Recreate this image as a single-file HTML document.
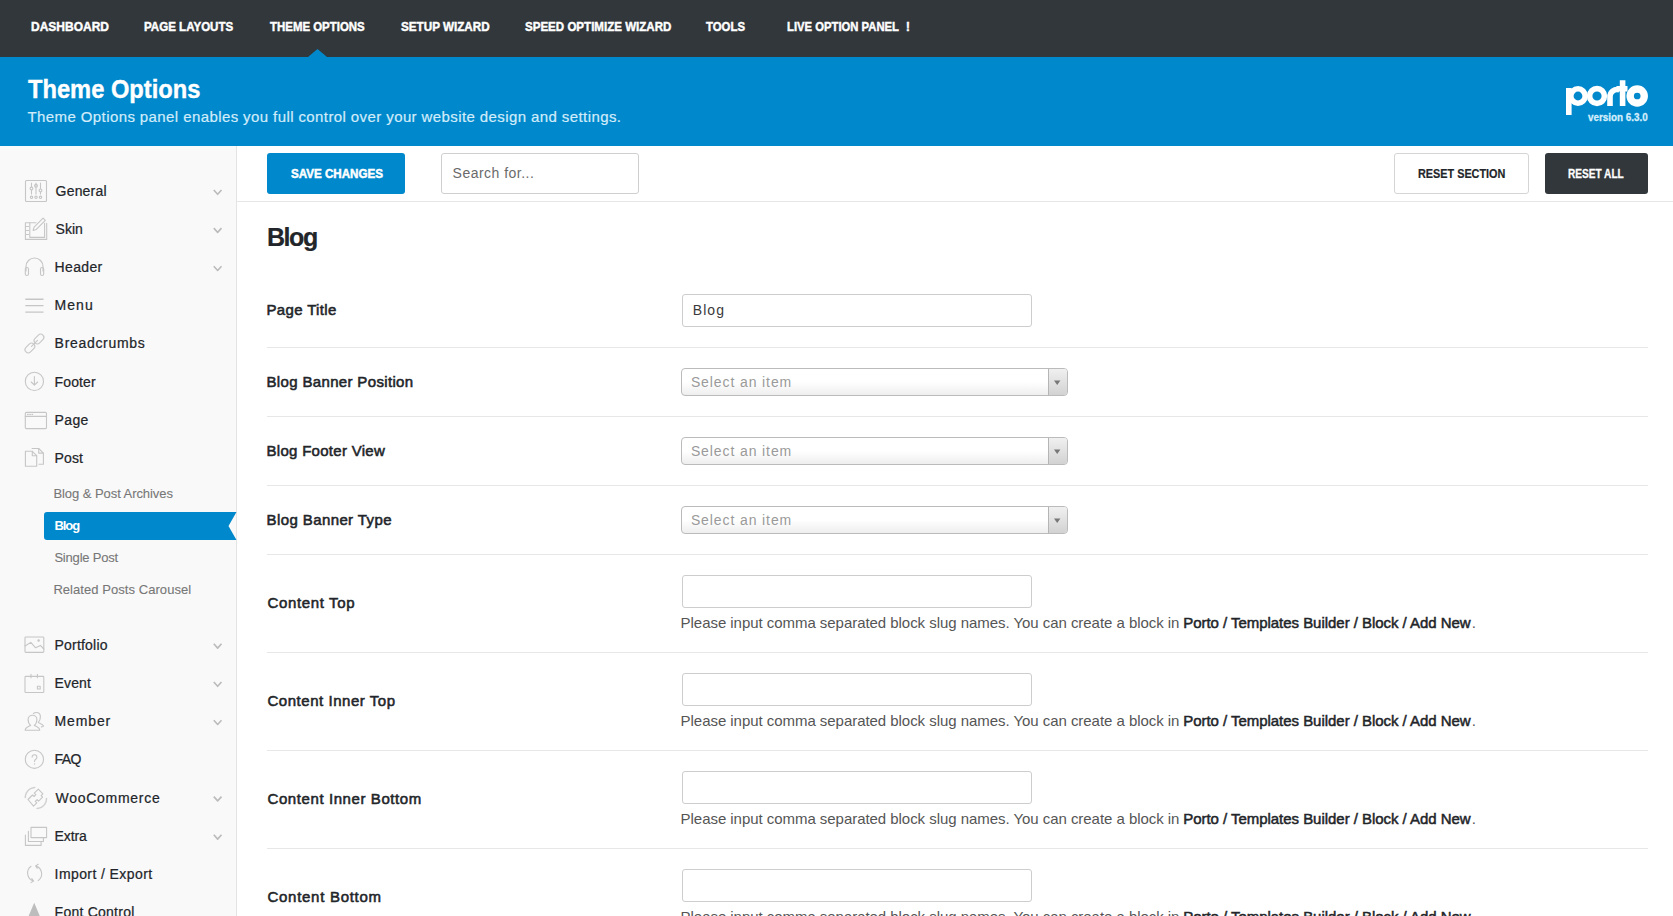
<!DOCTYPE html>
<html><head><meta charset="utf-8"><title>Theme Options</title>
<style>
html,body{margin:0;padding:0;}
body{width:1673px;height:916px;overflow:hidden;position:relative;background:#fff;font-family:"Liberation Sans", sans-serif;}
.t{position:absolute;white-space:nowrap;}
.a{position:absolute;box-sizing:border-box;}
</style></head><body>
<div class='a' style='left:0px;top:0px;width:1673px;height:57px;background:#32373c'></div>
<div class='a' style='left:0px;top:57px;width:1673px;height:89px;background:#0088cc'></div>
<svg class='a' style='left:300px;top:45px' width='36' height='13'><path d='M8 12L17.5 4 27 12z' fill='#0088cc'/></svg>
<svg class='a' style='left:1560px;top:76px' width='95' height='50' viewBox='1560 76 95 50'><g fill='none' stroke='#fff' stroke-width='5.6'><path d='M1568.8 88v27'/><circle cx='1578' cy='96' r='7.2'/><circle cx='1597' cy='96' r='7.4'/><path d='M1610 106v-9a7 7 0 0 1 9.5-7'/><path d='M1622.6 80.2v25.8M1616.5 88.8h11'/><circle cx='1637.2' cy='96' r='7.05' stroke-width='7.4'/></g></svg>
<div class='a' style='left:0px;top:146px;width:236px;height:770px;background:#f9f9f9'></div>
<div class='a' style='left:236px;top:146px;width:1px;height:770px;background:#e4e4e4'></div>
<div class='a' style='left:237px;top:201px;width:1436px;height:1px;background:#e6e6e6'></div>
<div class='a' style='left:267px;top:153px;width:138px;height:41px;background:#0088cc;border-radius:3px'></div>
<div class='a' style='left:441px;top:153px;width:198px;height:41px;background:#fff;border:1px solid #cfcfcf;border-radius:3px'></div>
<div class='a' style='left:1394px;top:153px;width:135px;height:41px;background:#fff;border:1px solid #d5d5d5;border-radius:3px'></div>
<div class='a' style='left:1545px;top:153px;width:103px;height:41px;background:#32373c;border-radius:3px'></div>
<div class='a' style='left:267px;top:347px;width:1381px;height:1px;background:#e7e7e7'></div>
<div class='a' style='left:267px;top:416px;width:1381px;height:1px;background:#e7e7e7'></div>
<div class='a' style='left:267px;top:485px;width:1381px;height:1px;background:#e7e7e7'></div>
<div class='a' style='left:267px;top:554px;width:1381px;height:1px;background:#e7e7e7'></div>
<div class='a' style='left:267px;top:652px;width:1381px;height:1px;background:#e7e7e7'></div>
<div class='a' style='left:267px;top:750px;width:1381px;height:1px;background:#e7e7e7'></div>
<div class='a' style='left:267px;top:848px;width:1381px;height:1px;background:#e7e7e7'></div>
<div class='a' style='left:682px;top:294px;width:350px;height:33px;border:1px solid #cdcdcd;border-radius:3px;background:#fff'></div>
<div class='a' style='left:681px;top:368px;width:387px;height:28px;border:1px solid #bbbbbb;border-radius:4px;background:linear-gradient(#fff 0%,#fff 50%,#eeeeee 100%)'></div>
<div class='a' style='left:1048px;top:369px;width:19px;height:26px;border-left:1px solid #b5b5b5;background:linear-gradient(#f0f0f0,#d2d2d2);border-radius:0 3px 3px 0'></div>
<svg class='a' style='left:1054px;top:380px' width='8' height='6'><path d='M0 0.4h6.4l-3.2 4.6z' fill='#777'/></svg>
<div class='a' style='left:681px;top:437px;width:387px;height:28px;border:1px solid #bbbbbb;border-radius:4px;background:linear-gradient(#fff 0%,#fff 50%,#eeeeee 100%)'></div>
<div class='a' style='left:1048px;top:438px;width:19px;height:26px;border-left:1px solid #b5b5b5;background:linear-gradient(#f0f0f0,#d2d2d2);border-radius:0 3px 3px 0'></div>
<svg class='a' style='left:1054px;top:449px' width='8' height='6'><path d='M0 0.4h6.4l-3.2 4.6z' fill='#777'/></svg>
<div class='a' style='left:681px;top:506px;width:387px;height:28px;border:1px solid #bbbbbb;border-radius:4px;background:linear-gradient(#fff 0%,#fff 50%,#eeeeee 100%)'></div>
<div class='a' style='left:1048px;top:507px;width:19px;height:26px;border-left:1px solid #b5b5b5;background:linear-gradient(#f0f0f0,#d2d2d2);border-radius:0 3px 3px 0'></div>
<svg class='a' style='left:1054px;top:518px' width='8' height='6'><path d='M0 0.4h6.4l-3.2 4.6z' fill='#777'/></svg>
<div class='a' style='left:682px;top:575px;width:350px;height:33px;border:1px solid #cdcdcd;border-radius:3px;background:#fff'></div>
<div class='a' style='left:682px;top:673px;width:350px;height:33px;border:1px solid #cdcdcd;border-radius:3px;background:#fff'></div>
<div class='a' style='left:682px;top:771px;width:350px;height:33px;border:1px solid #cdcdcd;border-radius:3px;background:#fff'></div>
<div class='a' style='left:682px;top:869px;width:350px;height:33px;border:1px solid #cdcdcd;border-radius:3px;background:#fff'></div>
<svg class='a' style='left:44px;top:512px' width='193' height='28'><path d='M3 0H192.5L184.5 14 192.5 28H3A3 3 0 0 1 0 25V3A3 3 0 0 1 3 0z' fill='#0088cc'/></svg>
<svg class='a' style='left:0;top:0' width='236' height='916' viewBox='0 0 236 916' fill='none' stroke='#c6c6c6' stroke-width='1.1' stroke-linecap='round' stroke-linejoin='round'><rect x='25.5' y='180.5' width='21' height='21' rx='1'/><path d='M31.5 183v11M36 183v11M40.5 183v11'/><circle cx='31.5' cy='188.5' r='1.4' fill='#f9f9f9'/><circle cx='36' cy='185.8' r='1.4' fill='#ddd'/><circle cx='40.5' cy='190.4' r='1.4' fill='#f9f9f9'/><circle cx='31.5' cy='197.3' r='1.2'/><circle cx='36' cy='197.3' r='1.2'/><circle cx='40.5' cy='197.3' r='1.2'/><path d='M36 222.7h-10.6v16.7h21.3v-16'/><path d='M29.8 222.7v14.7h14.8v-14'/><path d='M26.5 226.5h2M26.5 230.5h2M26.5 234.5h2'/><path d='M33.1 230.4l1-3.2 9-9 2.2 2.2-9 9z'/><path d='M26 271v-4.5a8.5 8.5 0 0 1 17 0v4.5'/><rect x='25.3' y='267.5' width='3.2' height='8' rx='1.6'/><rect x='40.5' y='267.5' width='3.2' height='8' rx='1.6'/><path d='M25.3 299.2h18.2M25.3 305.6h18.2M25.3 312.1h18.2' stroke-width='1.4' stroke-linecap='butt'/><rect x='33.5' y='335.8' width='11' height='6.4' rx='3.2' transform='rotate(-45 39 339)'/><rect x='24.4' y='344.8' width='11' height='6.4' rx='3.2' transform='rotate(-45 29.9 348)'/><path d='M31.5 346.4l6-6'/><circle cx='34.4' cy='381.4' r='9.1'/><path d='M34.4 376.5v8.5M31.2 382l3.2 3.2 3.2-3.2'/><rect x='25.3' y='412.4' width='21.2' height='16.2' rx='1'/><path d='M25.3 416.4h21.2'/><path d='M27.6 414.4h.6M29.8 414.4h.6M32 414.4h.6' stroke-width='1.2'/><path d='M32.1 448.5h6.6l4.7 4.6v11.2h-4.4'/><path d='M38.7 448.5v4.6h4.7'/><path d='M25.4 451.3h6.9l4.4 4.4v10.5h-11.3z'/><path d='M32.3 451.3v4.4h4.4'/><rect x='25' y='637' width='18.8' height='15.4' rx='.8'/><path d='M25 646l5.8-3.6 4.8 5.4 4.8-2.4 3.4 3.6'/><circle cx='38.6' cy='640.6' r='.7' fill='#c6c6c6'/><rect x='25' y='676.4' width='18.8' height='16.1' rx='.8'/><path d='M31 674.2v3.6M37.4 674.2v3.6'/><rect x='37.4' y='686.2' width='2.8' height='2.8'/><path d='M25.2 730.2c0-2.6 3.5-3.8 5.5-4.8-2.2-1.6-2.6-3.6-2.6-5.8 0-2.6 2-4.3 4.4-4.3s4.4 1.7 4.4 4.3c0 2.2-.4 4.2-2.6 5.8 2 1 5.4 2.2 5.4 4.8z'/><path d='M33.4 713.5c.9-.7 2-1 3-1 2.4 0 4 1.8 4 4.3 0 2-.4 4-2.1 5.6 1.6.8 4.6 1.8 5.3 3.6-.4.6-1.4.9-2.2.9'/><circle cx='34.4' cy='759.3' r='9.1'/><path d='M32.1 757.1a2.4 2.4 0 1 1 3.6 2.1c-.9.5-1.2 1.1-1.2 2.2'/><path d='M34.5 764h.01' stroke-width='1.4'/><path d='M25.3 797.5a10 10 0 0 1 10.2-10' stroke-dasharray='1.2 1.1' stroke-width='1.5' stroke='#d0d0d0'/><path d='M46.5 798.5a10 10 0 0 1-10.4 10' stroke-dasharray='1.2 1.1' stroke-width='1.5' stroke='#d0d0d0'/><path d='M28 799.5l4.5-4.5 1.5 1.5 1.8-1.8-1.5-1.5 4-4 4.6 4.6-1.8 1.8 1.5 1.5-4 4-1.5-1.5-1.8 1.8 1.5 1.5-3.3 3.3z'/><rect x='31' y='827.4' width='15.6' height='10.2'/><path d='M28.4 831.3v10.2h15v-3.9M25.4 835.1v10.3h15.7v-3.9'/><path d='M31 866.3a8.3 8.3 0 0 0 2.4 14.6M31.8 878.6l1.8 2.4-2.6 1.6'/><path d='M38.2 880.6a8.3 8.3 0 0 0-2.6-14.7M37.2 868.3l-1.6-2.4 2.6-1.6'/><path d='M34.2 902.8L28.2 917h12z' fill='#bdbdbd' stroke='none'/><path d='M213.8 190.0l3.85 4.3 3.85-4.3' stroke='#bbbbbb' stroke-width='1.6' stroke-linecap='butt'/><path d='M213.8 228.1l3.85 4.3 3.85-4.3' stroke='#bbbbbb' stroke-width='1.6' stroke-linecap='butt'/><path d='M213.8 266.2l3.85 4.3 3.85-4.3' stroke='#bbbbbb' stroke-width='1.6' stroke-linecap='butt'/><path d='M213.8 643.8l3.85 4.3 3.85-4.3' stroke='#bbbbbb' stroke-width='1.6' stroke-linecap='butt'/><path d='M213.8 682.0l3.85 4.3 3.85-4.3' stroke='#bbbbbb' stroke-width='1.6' stroke-linecap='butt'/><path d='M213.8 720.2l3.85 4.3 3.85-4.3' stroke='#bbbbbb' stroke-width='1.6' stroke-linecap='butt'/><path d='M213.8 796.6l3.85 4.3 3.85-4.3' stroke='#bbbbbb' stroke-width='1.6' stroke-linecap='butt'/><path d='M213.8 834.8l3.85 4.3 3.85-4.3' stroke='#bbbbbb' stroke-width='1.6' stroke-linecap='butt'/></svg>

<div class='t' style='left:31.00px;top:20.00px;font-size:13px;line-height:13px;font-weight:700;color:#fff;transform:scaleX(0.9226);transform-origin:0 0;-webkit-text-stroke:0.45px #fff;'>DASHBOARD</div><div class='t' style='left:144.00px;top:20.00px;font-size:13px;line-height:13px;font-weight:700;color:#fff;transform:scaleX(0.8885);transform-origin:0 0;-webkit-text-stroke:0.45px #fff;'>PAGE LAYOUTS</div><div class='t' style='left:270.00px;top:20.00px;font-size:13px;line-height:13px;font-weight:700;color:#fff;transform:scaleX(0.8801);transform-origin:0 0;-webkit-text-stroke:0.45px #fff;'>THEME OPTIONS</div><div class='t' style='left:401.00px;top:20.00px;font-size:13px;line-height:13px;font-weight:700;color:#fff;transform:scaleX(0.8980);transform-origin:0 0;-webkit-text-stroke:0.45px #fff;'>SETUP WIZARD</div><div class='t' style='left:524.70px;top:20.00px;font-size:13px;line-height:13px;font-weight:700;color:#fff;transform:scaleX(0.8887);transform-origin:0 0;-webkit-text-stroke:0.45px #fff;'>SPEED OPTIMIZE WIZARD</div><div class='t' style='left:706.20px;top:20.00px;font-size:13px;line-height:13px;font-weight:700;color:#fff;transform:scaleX(0.8759);transform-origin:0 0;-webkit-text-stroke:0.45px #fff;'>TOOLS</div><div class='t' style='left:786.60px;top:20.00px;font-size:13px;line-height:13px;font-weight:700;color:#fff;transform:scaleX(0.8675);transform-origin:0 0;-webkit-text-stroke:0.45px #fff;'>LIVE OPTION PANEL</div><div class='t' style='left:905.80px;top:20.00px;font-size:13px;line-height:13px;font-weight:700;color:#fff;-webkit-text-stroke:0.3px #fff;'>!</div><div class='t' style='left:27.50px;top:76.30px;font-size:26px;line-height:26px;font-weight:700;color:#fff;transform:scaleX(0.9111);transform-origin:0 0;-webkit-text-stroke:0.4px #fff;'>Theme Options</div><div class='t' style='left:27.50px;top:109.10px;font-size:15px;line-height:15px;font-weight:400;color:#d2ecfa;letter-spacing:0.404px;-webkit-text-stroke:0.2px #d2ecfa;'>Theme Options panel enables you full control over your website design and settings.</div><div class='t' style='left:1588.40px;top:111.80px;font-size:11px;line-height:11px;font-weight:700;color:#d4eefc;transform:scaleX(0.8958);transform-origin:0 0;-webkit-text-stroke:0.3px #d4eefc;'>version 6.3.0</div><div class='t' style='left:290.80px;top:167.60px;font-size:12.5px;line-height:12.5px;font-weight:700;color:#fff;transform:scaleX(0.9276);transform-origin:0 0;-webkit-text-stroke:0.5px #fff;'>SAVE CHANGES</div><div class='t' style='left:452.60px;top:166.00px;font-size:14px;line-height:14px;font-weight:400;color:#6a6a6a;letter-spacing:0.484px;'>Search for...</div><div class='t' style='left:1418.20px;top:167.90px;font-size:12.5px;line-height:12.5px;font-weight:700;color:#222529;transform:scaleX(0.8671);transform-origin:0 0;-webkit-text-stroke:0.2px #222529;'>RESET SECTION</div><div class='t' style='left:1568.10px;top:167.90px;font-size:12.5px;line-height:12.5px;font-weight:700;color:#fff;transform:scaleX(0.8079);transform-origin:0 0;-webkit-text-stroke:0.3px #fff;'>RESET ALL</div><div class='t' style='left:266.90px;top:225.10px;font-size:25px;line-height:25px;font-weight:700;color:#222529;letter-spacing:-1.390px;-webkit-text-stroke:0.2px #222529;'>Blog</div><div class='t' style='left:266.50px;top:302.30px;font-size:15px;line-height:15px;font-weight:400;color:#222529;letter-spacing:0.340px;-webkit-text-stroke:0.55px #222529;'>Page Title</div><div class='t' style='left:266.50px;top:374.00px;font-size:15px;line-height:15px;font-weight:400;color:#222529;letter-spacing:0.345px;-webkit-text-stroke:0.55px #222529;'>Blog Banner Position</div><div class='t' style='left:266.50px;top:443.10px;font-size:15px;line-height:15px;font-weight:400;color:#222529;letter-spacing:0.292px;-webkit-text-stroke:0.55px #222529;'>Blog Footer View</div><div class='t' style='left:266.50px;top:511.90px;font-size:15px;line-height:15px;font-weight:400;color:#222529;letter-spacing:0.406px;-webkit-text-stroke:0.55px #222529;'>Blog Banner Type</div><div class='t' style='left:267.50px;top:595.00px;font-size:15px;line-height:15px;font-weight:400;color:#222529;letter-spacing:0.645px;-webkit-text-stroke:0.55px #222529;'>Content Top</div><div class='t' style='left:267.50px;top:692.70px;font-size:15px;line-height:15px;font-weight:400;color:#222529;letter-spacing:0.531px;-webkit-text-stroke:0.55px #222529;'>Content Inner Top</div><div class='t' style='left:267.50px;top:790.80px;font-size:15px;line-height:15px;font-weight:400;color:#222529;letter-spacing:0.590px;-webkit-text-stroke:0.55px #222529;'>Content Inner Bottom</div><div class='t' style='left:267.50px;top:888.80px;font-size:15px;line-height:15px;font-weight:400;color:#222529;letter-spacing:0.713px;-webkit-text-stroke:0.55px #222529;'>Content Bottom</div><div class='t' style='left:692.80px;top:302.80px;font-size:14px;line-height:14px;font-weight:400;color:#3a3a3a;letter-spacing:1.055px;'>Blog</div><div class='t' style='left:690.90px;top:374.80px;font-size:14px;line-height:14px;font-weight:400;color:#9a9a9a;letter-spacing:0.896px;'>Select an item</div><div class='t' style='left:690.90px;top:443.80px;font-size:14px;line-height:14px;font-weight:400;color:#9a9a9a;letter-spacing:0.896px;'>Select an item</div><div class='t' style='left:690.90px;top:512.80px;font-size:14px;line-height:14px;font-weight:400;color:#9a9a9a;letter-spacing:0.896px;'>Select an item</div><div class='t' style='left:680.60px;top:614.90px;font-size:15px;line-height:15px;font-weight:400;color:#555;letter-spacing:-0.044px;'>Please input comma separated block slug names. You can create a block in</div><div class='t' style='left:1183.20px;top:614.90px;font-size:15px;line-height:15px;font-weight:400;color:#222529;letter-spacing:-0.036px;-webkit-text-stroke:0.5px #222529;'>Porto / Templates Builder / Block / Add New</div><div class='t' style='left:1471.80px;top:614.90px;font-size:15px;line-height:15px;font-weight:400;color:#555;'>.</div><div class='t' style='left:680.60px;top:712.90px;font-size:15px;line-height:15px;font-weight:400;color:#555;letter-spacing:-0.044px;'>Please input comma separated block slug names. You can create a block in</div><div class='t' style='left:1183.20px;top:712.90px;font-size:15px;line-height:15px;font-weight:400;color:#222529;letter-spacing:-0.036px;-webkit-text-stroke:0.5px #222529;'>Porto / Templates Builder / Block / Add New</div><div class='t' style='left:1471.80px;top:712.90px;font-size:15px;line-height:15px;font-weight:400;color:#555;'>.</div><div class='t' style='left:680.60px;top:810.90px;font-size:15px;line-height:15px;font-weight:400;color:#555;letter-spacing:-0.044px;'>Please input comma separated block slug names. You can create a block in</div><div class='t' style='left:1183.20px;top:810.90px;font-size:15px;line-height:15px;font-weight:400;color:#222529;letter-spacing:-0.036px;-webkit-text-stroke:0.5px #222529;'>Porto / Templates Builder / Block / Add New</div><div class='t' style='left:1471.80px;top:810.90px;font-size:15px;line-height:15px;font-weight:400;color:#555;'>.</div><div class='t' style='left:680.60px;top:908.90px;font-size:15px;line-height:15px;font-weight:400;color:#555;letter-spacing:-0.044px;'>Please input comma separated block slug names. You can create a block in</div><div class='t' style='left:1183.20px;top:908.90px;font-size:15px;line-height:15px;font-weight:400;color:#222529;letter-spacing:-0.036px;-webkit-text-stroke:0.5px #222529;'>Porto / Templates Builder / Block / Add New</div><div class='t' style='left:1471.80px;top:908.90px;font-size:15px;line-height:15px;font-weight:400;color:#555;'>.</div><div class='t' style='left:55.60px;top:184.00px;font-size:14px;line-height:14px;font-weight:400;color:#222529;letter-spacing:0.184px;-webkit-text-stroke:0.22px #222529;'>General</div><div class='t' style='left:55.60px;top:222.12px;font-size:14px;line-height:14px;font-weight:400;color:#222529;letter-spacing:-0.016px;-webkit-text-stroke:0.22px #222529;'>Skin</div><div class='t' style='left:54.60px;top:260.24px;font-size:14px;line-height:14px;font-weight:400;color:#222529;letter-spacing:0.349px;-webkit-text-stroke:0.22px #222529;'>Header</div><div class='t' style='left:54.60px;top:298.36px;font-size:14px;line-height:14px;font-weight:400;color:#222529;letter-spacing:1.022px;-webkit-text-stroke:0.22px #222529;'>Menu</div><div class='t' style='left:54.60px;top:336.48px;font-size:14px;line-height:14px;font-weight:400;color:#222529;letter-spacing:0.695px;-webkit-text-stroke:0.22px #222529;'>Breadcrumbs</div><div class='t' style='left:54.60px;top:374.60px;font-size:14px;line-height:14px;font-weight:400;color:#222529;letter-spacing:0.120px;-webkit-text-stroke:0.22px #222529;'>Footer</div><div class='t' style='left:54.60px;top:412.72px;font-size:14px;line-height:14px;font-weight:400;color:#222529;letter-spacing:0.363px;-webkit-text-stroke:0.22px #222529;'>Page</div><div class='t' style='left:54.60px;top:450.84px;font-size:14px;line-height:14px;font-weight:400;color:#222529;letter-spacing:0.092px;-webkit-text-stroke:0.22px #222529;'>Post</div><div class='t' style='left:54.60px;top:637.80px;font-size:14px;line-height:14px;font-weight:400;color:#222529;letter-spacing:0.191px;-webkit-text-stroke:0.22px #222529;'>Portfolio</div><div class='t' style='left:54.60px;top:676.00px;font-size:14px;line-height:14px;font-weight:400;color:#222529;letter-spacing:0.097px;-webkit-text-stroke:0.22px #222529;'>Event</div><div class='t' style='left:54.60px;top:714.20px;font-size:14px;line-height:14px;font-weight:400;color:#222529;letter-spacing:0.863px;-webkit-text-stroke:0.22px #222529;'>Member</div><div class='t' style='left:54.60px;top:752.40px;font-size:14px;line-height:14px;font-weight:400;color:#222529;letter-spacing:-0.609px;-webkit-text-stroke:0.22px #222529;'>FAQ</div><div class='t' style='left:55.60px;top:790.60px;font-size:14px;line-height:14px;font-weight:400;color:#222529;letter-spacing:0.710px;-webkit-text-stroke:0.22px #222529;'>WooCommerce</div><div class='t' style='left:54.60px;top:828.80px;font-size:14px;line-height:14px;font-weight:400;color:#222529;letter-spacing:-0.097px;-webkit-text-stroke:0.22px #222529;'>Extra</div><div class='t' style='left:54.60px;top:867.00px;font-size:14px;line-height:14px;font-weight:400;color:#222529;letter-spacing:0.406px;-webkit-text-stroke:0.22px #222529;'>Import / Export</div><div class='t' style='left:54.60px;top:905.20px;font-size:14px;line-height:14px;font-weight:400;color:#222529;letter-spacing:0.243px;-webkit-text-stroke:0.22px #222529;'>Font Control</div><div class='t' style='left:53.40px;top:486.90px;font-size:13px;line-height:13px;font-weight:400;color:#777;letter-spacing:-0.057px;-webkit-text-stroke:0.1px #777;'>Blog &amp; Post Archives</div><div class='t' style='left:54.40px;top:518.80px;font-size:13px;line-height:13px;font-weight:700;color:#fff;letter-spacing:-1.014px;'>Blog</div><div class='t' style='left:54.40px;top:550.90px;font-size:13px;line-height:13px;font-weight:400;color:#777;letter-spacing:-0.195px;-webkit-text-stroke:0.1px #777;'>Single Post</div><div class='t' style='left:53.40px;top:582.70px;font-size:13px;line-height:13px;font-weight:400;color:#777;letter-spacing:0.058px;-webkit-text-stroke:0.1px #777;'>Related Posts Carousel</div>
</body></html>
